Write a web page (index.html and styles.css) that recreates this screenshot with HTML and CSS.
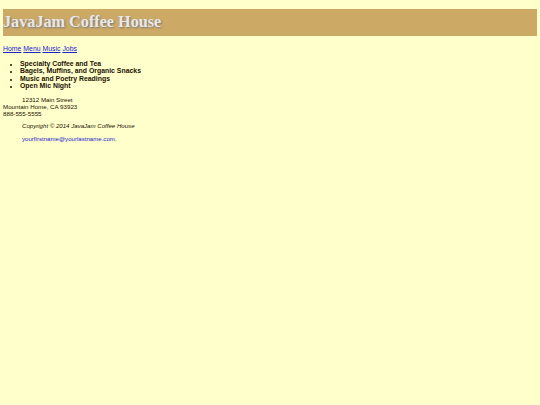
FILE: index.html
```html
<!DOCTYPE html>
<html>
<head>
<meta charset="utf-8">
<title>JavaJam Coffee House</title>
<link rel="stylesheet" href="styles.css">
</head>
<body>
<div class="wrapper">
  <header class="masthead">
    <h1 class="title">JavaJam Coffee House</h1>
  </header>
  <nav class="nav">
    <a href="#">Home</a> <a href="#">Menu</a> <a href="#">Music</a> <a href="#">Jobs</a>
  </nav>
  <main class="content">
    <ul class="features">
      <li>Specialty Coffee and Tea</li>
      <li>Bagels, Muffins, and Organic Snacks</li>
      <li>Music and Poetry Readings</li>
      <li>Open Mic Night</li>
    </ul>
    <div class="address">
      <div class="street">12312 Main Street</div>
      <div>Mountain Home, CA 93923</div>
      <div>888-555-5555</div>
    </div>
  </main>
  <footer class="footer">
    <div class="copy">Copyright &copy; 2014 JavaJam Coffee House</div>
    <div class="mail"><a href="#">yourfirstname@yourlastname.com</a>.</div>
  </footer>
</div>
</body>
</html>
```
FILE: styles.css
```css
html, body {
  margin: 0;
  padding: 0;
  background: #ffffcc;
}
body {
  padding: 9px 3px 0 3px;
  font-family: "Liberation Sans", Arial, sans-serif;
  color: #221100;
  font-size: 7px;
}
.masthead {
  background: #ccaa66;
  height: 27px;
  display: flex;
  align-items: center;
}
.title {
  margin: 0;
  font-family: "Liberation Serif", Georgia, serif;
  font-weight: bold;
  font-size: 16.2px;
  color: #e8e8e8;
  text-shadow: 1px 1px 2px #777;
}
.nav {
  margin-top: 9px;
  font-size: 6.9px;
}
.nav a {
  color: #2222cc;
}
.features {
  margin: 8px 0 0 0;
  padding-left: 17px;
  font-weight: bold;
  font-size: 6.9px;
  line-height: 7.4px;
}
.features li::marker {
  font-size: 6px;
}
.address {
  margin-top: 6px;
  font-size: 6.2px;
  line-height: 7.3px;
}
.street {
  padding-left: 19px;
}
.footer {
  padding-left: 19px;
  font-size: 6.1px;
}
.copy {
  margin-top: 4px;
  font-style: italic;
}
.mail {
  margin-top: 6px;
}
.mail a {
  color: #2222cc;
}
```
